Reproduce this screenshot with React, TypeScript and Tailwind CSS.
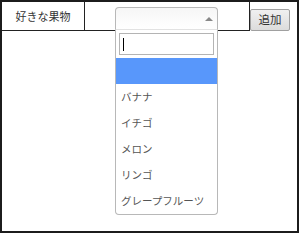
const fruits = ["", "バナナ", "イチゴ", "メロン", "リンゴ", "グレープフルーツ"];

function FruitSelect() {
  return (
    <div className="relative w-[103px]">
      <div className="h-[23px] border border-[#b8b8b8] border-b-[#e2e2e2] rounded-t-[4px] bg-gradient-to-b from-[#f6f6f6] to-white flex items-center justify-end pr-[4px]">
        <span className="w-0 h-0 border-x-[4px] border-x-transparent border-b-[4px] border-b-[#888]" />
      </div>
      <div className="absolute left-0 top-[23px] w-[103px] border border-t-0 border-[#b8b8b8] rounded-b-[4px] bg-white">
        <div className="px-[3px] pt-[3px] pb-[3px]">
          <div className="h-[22px] border border-[#b4b4b4] flex items-center pl-[3px]">
            <span className="w-[1px] h-[13px] bg-black" />
          </div>
        </div>
        <ul>
          {fruits.map((f, i) => (
            <li
              key={i}
              className={
                "h-[26px] flex items-center pl-[5px] text-[10.5px] " +
                (i === 0 ? "bg-[#5897fb] text-white" : "text-[#555]")
              }
            >
              {f}
            </li>
          ))}
        </ul>
      </div>
    </div>
  );
}

export default function App() {
  return (
    <div className="w-[300px] h-[234px] bg-white font-['Noto_Sans_CJK_JP',sans-serif]">
      <div className="w-[299px] h-[233px] border-2 border-[#1c1c1c]">
        <div className="flex items-start">
          <div className="w-[83px] h-[29px] border-r border-b border-[#222] flex items-center justify-center text-[11px] text-[#333]">
            好きな果物
          </div>
          <div className="w-[165px] h-[29px] border-r border-b border-[#222] pl-[30px] pt-[5px]">
            <FruitSelect />
          </div>
          <button
            type="button"
            className="mt-[7px] w-[40px] h-[22px] border border-[#a0a0a0] rounded-[2px] bg-gradient-to-b from-[#f0f0f0] to-[#dcdcdc] text-[11.5px] text-[#333] flex items-center justify-center"
          >
            追加
          </button>
        </div>
      </div>
    </div>
  );
}
